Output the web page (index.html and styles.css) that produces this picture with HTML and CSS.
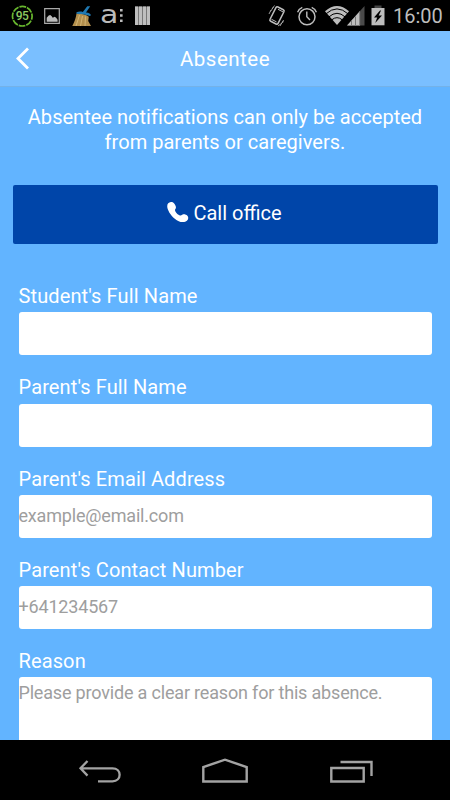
FILE: index.html
```html
<!DOCTYPE html>
<html lang="en">
<head>
<meta charset="UTF-8" />
<meta name="viewport" content="width=device-width, initial-scale=1" />
<title>Absentee</title>
<link rel="stylesheet" href="styles.css">
</head>
<body>

<div class="status-bar">
  <div class="notifications">
    <svg width="24" height="24" viewBox="0 0 24 24">
      <circle cx="12.3" cy="12.2" r="9.8" fill="none" stroke="#68b82e" stroke-width="1.7" stroke-dasharray="6.7 1" stroke-dashoffset="3.2" />
      <text x="12.3" y="16.3" text-anchor="middle" class="battery-text" textLength="13">95</text>
    </svg>
    <svg width="24" height="24" viewBox="0 0 24 24">
      <path d="M4.700 4.600h14.600v14.800H4.700z" fill="none" stroke="#aaa" stroke-width="1.2" />
      <path d="M6.700 17.800v-4l2-2.300 1.500-.5 1.500 1.200 1 1.600 2-1 1.400 1 1.500 2v2z" fill="#bbb" />
    </svg>
    <svg width="24" height="24" viewBox="0 0 24 24">
      <path d="M6.500 9.500c5 0 9.500 1 12.300 3.200l-.6 4.300 2.800 5H2.300c2-4 3.700-8 4.200-12.500z" fill="#b38f4d" />
      <path d="M9.500 11 6 22M12.500 12 10.500 22M15.500 12.500 15 22" stroke="#d6b877" stroke-width=".9" />
      <path d="M6.500 8.300c1.500-.7 4-.9 6.300-.4L17.300 2.300h2.900L16 8.600c3 .3 4.700 1.200 4.900 2.700l-1 .8C15 10.500 11 9.700 6.500 9.700z" fill="#1f79b2" />
    </svg>
    <div class="logo">
      <span>a</span>
      <svg width="3" height="14" viewBox="0 0 3 14">
        <path d="M0 0h2.600v2.500H0zM0 5.300h2.600v2.500H0zM0 10.600h2.600v2.500H0z" fill="#bbb" />
      </svg>
    </div>
    <svg width="24" height="24" viewBox="0 0 24 24">
      <path d="M5 2.500h15v18.500H5z" fill="#777" />
      <path d="M5 2.500h3v18.500H5zM9 2.500h3v18.500H9zM13 2.500h3v18.500h-3zM17 2.500h3v18.500h-3z" fill="#bebebe" />
    </svg>
  </div>
  <div class="indicators">
    <svg class="vibrate" width="20" height="24" viewBox="0 0 20 24">
      <rect x="5.500" y="3.500" width="9" height="16" rx="1.500" transform="rotate(27 10 11.500)" fill="none" stroke="#bdbdbd" stroke-width="1.500" />
      <path d="M11 5.300l5 2.600M4.500 15.300l5 2.600" stroke="#bdbdbd" stroke-width="1" />
      <path d="M2 10l2-4M3.500 7.500l3-4.500M5 5l2.500-3.500M11 22l4-3M13 22l3-5M15.500 19l1-3" stroke="#aaa" stroke-width=".9" />
    </svg>
    <svg class="alarm" width="22" height="24" viewBox="0 0 22 24">
      <circle cx="11" cy="12.800" r="8" fill="none" stroke="#bdbdbd" stroke-width="1.500" />
      <path d="M10.800 7.500v5.300l3.200 3.200M1.600 8.200q1.200-3.400 4.700-4.900M20.400 8.200q-1.200-3.400-4.700-4.900" fill="none" stroke="#bdbdbd" stroke-width="1.400" />
    </svg>
    <svg class="wifi" width="24" height="24" viewBox="0 0 24 24">
      <path d="M0 7.200Q12-3.200 24 7.200L12 21z" fill="#bdbdbd" />
      <path d="M1 9.800Q12 0 23 9.800M4 12.800Q12 5.800 20 12.800M6.800 15.800Q12 11.500 17.200 15.800" fill="none" stroke="#000" stroke-width="1" />
    </svg>
    <svg class="signal" width="18" height="24" viewBox="0 0 18 24">
      <path d="M0 21.500 17.500 2v19.500z" fill="#4a4a4a" />
      <path d="M0 21.500 13 7v14.500z" fill="#bdbdbd" />
      <path d="M4.500 17v4.500M8.500 12.500v9M12.700 8v13.500" stroke="#777" stroke-width="1" />
    </svg>
    <svg class="battery" width="14" height="24" viewBox="0 0 14 24">
      <path d="M3.500 1.500h7V4h-7z" fill="#444" />
      <path d="M.500 4h13v17.300H.500z" fill="#bdbdbd" />
      <path d="M9 6.500 3 13.500h3.200l-2 5.500L11 11.500H7.700L10 6.500z" fill="#000" />
    </svg>
    <span class="clock">16:00</span>
  </div>
</div>

<header class="header">
  <svg class="back" width="16" height="24" viewBox="0 0 16 24">
    <path d="M13 1.500 3 11.500l10 10" fill="none" stroke="#fff" stroke-width="2.800" />
  </svg>
  <h1>Absentee</h1>
</header>

<main class="content">
  <p class="intro">Absentee notifications can only be accepted<br>from parents or caregivers.</p>

  <button type="button" class="call-button">
    <svg width="22" height="22" viewBox="0 0 22 22">
      <path d="M1.200 1.300C2.700-.3 5.400-.5 6.700 1c1.800 2 3 4.300 1.700 6-.6.800-.5 1.500 0 2.400 1 1.800 2.600 3.200 4.500 4 .8.300 1.500 0 2.300-.6 1.600-1 3.800-.4 5.200 1 1.300 1.300 1.100 3.500-.5 5-2 1.800-5.700 1.600-8.700.1C6.500 16.500 2.500 12 .7 7c-.7-2-.7-4.400.5-5.700z" fill="#fff" />
    </svg>
    <span>Call office</span>
  </button>

  <form class="absentee-form">
    <label for="student">Student's Full Name</label>
    <input type="text" id="student" />

    <label for="parent">Parent's Full Name</label>
    <input type="text" id="parent" />

    <label for="email">Parent's Email Address</label>
    <input type="email" id="email" placeholder="example@email.com" />

    <label for="phone">Parent's Contact Number</label>
    <input type="tel" id="phone" placeholder="+641234567" />

    <label for="reason">Reason</label>
    <textarea id="reason" placeholder="Please provide a clear reason for this absence."></textarea>
  </form>
</main>

<nav class="nav-bar">
  <svg width="46" height="28" viewBox="0 0 46 28">
    <path d="M10.500 5 3.500 12.300l7 7.300M3.500 12.300h32c9.500 0 9.500 13 0 13H21" fill="none" stroke="#a3a3a3" stroke-width="2.300" />
  </svg>
  <svg width="48" height="28" viewBox="0 0 48 28">
    <path d="M2.300 25.500V11L24 3.700 45.700 11v14.500z" fill="none" stroke="#a3a3a3" stroke-width="2.400" />
  </svg>
  <svg width="46" height="28" viewBox="0 0 46 28">
    <path d="M4.300 12h32.400v13.500H4.300zM13.500 6h31v14" fill="none" stroke="#a3a3a3" stroke-width="2.400" />
  </svg>
</nav>

</body>
</html>
```

FILE: styles.css
```css
* {
  box-sizing: border-box;
}
body {
  margin: 0;
  height: 800px;
  display: flex;
  flex-direction: column;
  overflow: hidden;
  font-family: Roboto, sans-serif;
  font-size: 20px;
  color: #fff;
  background: #62b4ff;
}
svg {
  display: block;
  flex: none;
}

.status-bar {
  flex: none;
  height: 31px;
  padding: 0 8px 0 10px;
  display: flex;
  align-items: center;
  justify-content: space-between;
  background: #000;
}
.notifications {
  display: flex;
  align-items: center;
  gap: 6px;
}
.indicators {
  display: flex;
  align-items: center;
}
.battery-text {
  font-size: 12px;
  font-weight: 500;
  fill: #8ecb62;
}
.logo {
  display: flex;
  align-items: center;
  width: 24px;
  font-family: "DejaVu Sans", sans-serif;
  font-size: 25px;
  line-height: 29px;
  color: #bbb;
}
.logo span {
  width: 20px;
  margin-top: -3px;
  transform: scaleX(1.2);
  transform-origin: left;
}
.alarm {
  margin-left: 9px;
}
.wifi {
  margin-left: 7px;
}
.signal {
  margin-left: -2px;
}
.battery {
  margin-left: 6px;
}
.clock {
  width: 49px;
  margin-left: 8px;
  padding-top: 1px;
  font-size: 20px;
  line-height: 31px;
  color: #bdbdbd;
}

.header {
  flex: none;
  height: 56px;
  padding: 0 15px;
  display: grid;
  grid-template-columns: 16px 1fr 16px;
  align-items: center;
  background: #7abfff;
  border-bottom: 1px solid #74b2e8;
}
.header h1 {
  margin: 0;
  font-size: 20.5px;
  font-weight: normal;
  letter-spacing: 0.5px;
  text-align: center;
}

.content {
  flex: 1;
  min-height: 0;
  overflow: hidden;
  padding: 18px 12.5px 0;
}
.intro {
  margin: 0 0 30px;
  line-height: 25px;
  letter-spacing: 0.03px;
  text-align: center;
}
.call-button {
  display: flex;
  align-items: center;
  justify-content: center;
  gap: 4px;
  width: 100%;
  height: 59px;
  padding: 0 1px 3px 0;
  border: 0;
  border-radius: 2px;
  font: inherit;
  color: #fff;
  background: #0045a9;
}
.absentee-form {
  padding: 39px 6px 0;
}
label {
  display: block;
  height: 29.25px;
  line-height: 26px;
  letter-spacing: 0.12px;
}
input,
textarea {
  display: block;
  width: 100%;
  height: 43px;
  margin: 0 0 19px;
  padding: 0 0 2px;
  border: 0;
  border-radius: 3px;
  font: inherit;
  font-size: 18px;
  letter-spacing: -0.18px;
  background: #fff;
  resize: none;
}
textarea {
  height: 120px;
  padding: 4px 0;
  line-height: 24px;
}
::placeholder {
  color: #9e9e9e;
}

.nav-bar {
  flex: none;
  height: 60px;
  display: flex;
  align-items: center;
  justify-content: center;
  gap: 78px;
  background: #000;
}
```
